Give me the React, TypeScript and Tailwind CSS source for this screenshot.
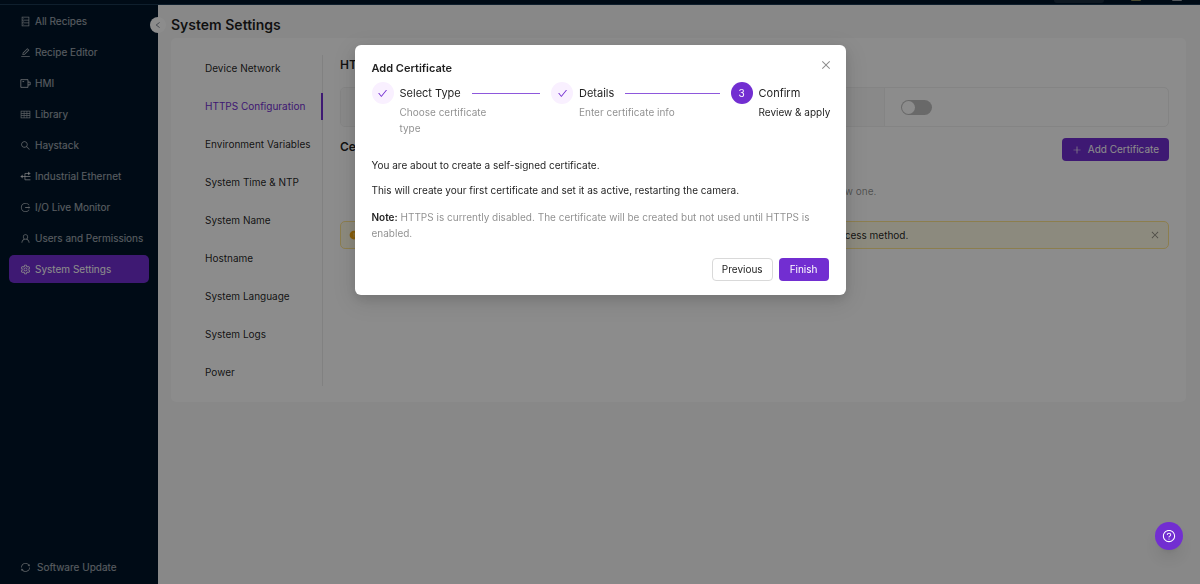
import { useState } from "react";
import type { IconType } from "react-icons";
import {
  AiFillExclamationCircle,
  AiOutlineCheck,
  AiOutlineClose,
  AiOutlineDatabase,
  AiOutlineEdit,
  AiOutlineLeft,
  AiOutlineLogout,
  AiOutlinePlus,
  AiOutlineQuestionCircle,
  AiOutlineSearch,
  AiOutlineSetting,
  AiOutlineSync,
  AiOutlineTable,
  AiOutlineUser,
} from "react-icons/ai";

interface NavItem {
  label: string;
  icon: IconType | (() => React.ReactNode);
}

const HmiIcon = () => (
  <svg viewBox="0 0 20 20" className="size-full" fill="none" stroke="currentColor" strokeWidth="1.8">
    <path d="M1.5 3h13v14h-13z" />
    <path d="M14.5 7.5h4v5h-4M4.5 6.5h3" />
  </svg>
);

const EthernetIcon = () => (
  <svg viewBox="0 0 20 20" className="size-full" fill="none" stroke="currentColor" strokeWidth="1.8">
    <path d="M2 10h17M9 4.5h8M9 4.5v11.5M9 16h10" />
    <path d="M5 6.5 0.5 10 5 13.5zM14.5 1 19.5 4.5l-5 3.5z" fill="currentColor" stroke="none" />
  </svg>
);

const navItems: NavItem[] = [
  { label: "All Recipes", icon: AiOutlineDatabase },
  { label: "Recipe Editor", icon: AiOutlineEdit },
  { label: "HMI", icon: HmiIcon },
  { label: "Library", icon: AiOutlineTable },
  { label: "Haystack", icon: AiOutlineSearch },
  { label: "Industrial Ethernet", icon: EthernetIcon },
  { label: "I/O Live Monitor", icon: AiOutlineLogout },
  { label: "Users and Permissions", icon: AiOutlineUser },
  { label: "System Settings", icon: AiOutlineSetting },
];

const settingsTabs = [
  "Device Network",
  "HTTPS Configuration",
  "Environment Variables",
  "System Time & NTP",
  "System Name",
  "Hostname",
  "System Language",
  "System Logs",
  "Power",
];

const steps = [
  { title: "Select Type", description: "Choose certificate type" },
  { title: "Details", description: "Enter certificate info" },
  { title: "Confirm", description: "Review & apply" },
];

const Sidebar = () => (
  <aside className="relative flex w-[158px] shrink-0 flex-col justify-between bg-[#001529] text-white/65">
    <nav className="flex flex-col gap-[3px] px-[9px] pt-0.5">
      {navItems.map(({ label, icon: Icon }) => (
        <a
          key={label}
          href="#"
          className={`flex h-7 items-center gap-1 rounded-[5px] pl-[11px] text-[10px] whitespace-nowrap ${
            label === "System Settings" ? "bg-[#722ed1] text-white" : ""
          }`}
        >
          <span className="size-[11px] shrink-0 [&>svg]:size-full">
            <Icon />
          </span>
          {label}
        </a>
      ))}
    </nav>
    <a href="#" className="mb-[3px] flex h-7 items-center gap-1.5 pl-5 text-[10px]">
      <AiOutlineSync className="size-[11px]" />
      Software Update
    </a>
    <button
      aria-label="Collapse menu"
      className="absolute top-3 -right-2 flex size-4 items-center justify-center rounded-full bg-white text-gray-500"
    >
      <AiOutlineLeft className="size-2" />
    </button>
  </aside>
);

const HttpsPanel = () => {
  const [enabled, setEnabled] = useState(false);

  return (
    <section className="min-w-0 flex-1">
      <h2 className="text-[12px] leading-5 font-semibold">HTTPS Configuration</h2>
      <div className="mt-3 flex h-10 overflow-hidden rounded-[5px] border border-[#f0f0f0]">
        <label
          htmlFor="https"
          className="flex w-[544px] items-center border-r border-[#f0f0f0] bg-[#fafafa] px-4 text-[10px] text-black/65"
        >
          HTTPS
        </label>
        <div className="flex items-center px-4">
          <input
            id="https"
            type="checkbox"
            role="switch"
            checked={enabled}
            onChange={(e) => setEnabled(e.target.checked)}
            className="h-[15px] w-[31px] appearance-none rounded-full bg-black/25 before:m-px before:block before:size-[13px] before:rounded-full before:bg-white checked:bg-[#722ed1] checked:before:ml-[17px]"
          />
        </div>
      </div>
      <div className="mt-[11px] flex items-start justify-between">
        <h2 className="text-[12px] leading-[18px] font-semibold">Certificates</h2>
        <button className="flex h-[23px] items-center gap-1.5 rounded-[4px] bg-[#722ed1] px-[10px] text-[10px] text-white">
          <AiOutlinePlus className="size-[10px]" />
          Add Certificate
        </button>
      </div>
      <p className="mt-[22px] text-center text-[10px] leading-4 text-black/45">
        No certificates are available. Please add a new one.
      </p>
      <div
        role="alert"
        className="mt-[22px] flex h-7 items-center gap-1.5 rounded-[5px] border border-[#ffe58f] bg-[#fffbe6] px-2 text-[10px]"
      >
        <AiFillExclamationCircle className="size-[10px] shrink-0 text-[#faad14]" />
        <span className="flex-1">
          HTTPS is currently disabled. The camera can only be reached over HTTP until you choose another access method.
        </span>
        <button aria-label="Close alert" className="text-black/45">
          <AiOutlineClose className="size-[10px]" />
        </button>
      </div>
    </section>
  );
};

const CertificateModal = () => (
  <div className="fixed inset-0 flex items-start justify-center bg-black/45 pt-[45px]">
    <div
      role="dialog"
      aria-modal="true"
      aria-labelledby="modal-title"
      className="relative w-[491px] rounded-[6px] bg-white px-[17px] py-[14px] shadow-[0_4px_12px_rgba(0,0,0,0.12),0_6px_24px_6px_rgba(0,0,0,0.08)]"
    >
      <button aria-label="Close" className="absolute top-[14px] right-[14px] text-black/45">
        <AiOutlineClose className="size-3" />
      </button>
      <h2 id="modal-title" className="text-[11px] leading-[18px] font-semibold">
        Add Certificate
      </h2>
      <ol className="mt-[5px] flex gap-[11px]">
        {steps.map((step, index) => {
          const current = index === steps.length - 1;
          return (
            <li key={step.title} className={`flex gap-1.5 ${current ? "w-[98px] shrink-0" : "min-w-0 flex-1"}`}>
              <span
                className={`flex size-[22px] shrink-0 items-center justify-center rounded-full text-[10px] ${
                  current ? "bg-[#722ed1] text-white" : "bg-[#f9f0ff] text-[#722ed1]"
                }`}
              >
                {current ? index + 1 : <AiOutlineCheck className="size-[11px]" />}
              </span>
              <div className="min-w-0 flex-1 whitespace-nowrap">
                <div className="flex items-center gap-[11px] text-[11px] leading-[22px]">
                  {step.title}
                  {!current && <span className="h-px flex-1 bg-[#8e58dc]" />}
                </div>
                <p
                  className={`text-[10px] leading-4 ${
                    current ? "" : "max-w-[98px] whitespace-normal text-black/45"
                  }`}
                >
                  {step.description}
                </p>
              </div>
            </li>
          );
        })}
      </ol>
      <div className="mt-[21px] text-[10px] leading-4">
        <p>You are about to create a self-signed certificate.</p>
        <p className="mt-[9px]">
          This will create your first certificate and set it as active, restarting the camera.
        </p>
        <p className="mt-[11px] text-black/45">
          <strong className="font-semibold text-black/88">Note:</strong> HTTPS is currently disabled. The
          certificate will be created but not used until HTTPS is enabled.
        </p>
      </div>
      <div className="mt-[17px] flex justify-end gap-1.5 text-[10px]">
        <button className="h-[23px] rounded-[4px] border border-[#d9d9d9] px-[9px]">Previous</button>
        <button className="h-[23px] rounded-[4px] bg-[#722ed1] px-[11px] text-white">Finish</button>
      </div>
    </div>
  </div>
);

const App = () => {
  const [activeTab, setActiveTab] = useState("HTTPS Configuration");

  return (
    <div className="flex min-h-screen flex-col bg-[#f7f7f7] font-[Inter,sans-serif] text-black/88">
      <header className="flex h-[5px] items-start justify-end border-b border-[#1d3a52] bg-[#001529] pr-[18px]">
        <span className="mr-[27px] h-[3px] w-[50px] rounded-b-[3px] bg-white/10" />
        <span className="mr-[31px] h-px w-[10px] rounded-b-full bg-[#8a8a5a]" />
        <span className="h-px w-[10px] rounded-b-full bg-white/60" />
      </header>
      <div className="flex flex-1">
        <Sidebar />
        <main className="min-w-0 flex-1 pr-[14px] pl-[13px]">
          <h1 className="pt-2 text-[14px] leading-6 font-semibold">System Settings</h1>
          <div className="mt-px flex rounded-[5px] bg-white px-[17px] pt-[17px] pb-4">
            <div className="mr-[17px] flex w-[135px] flex-col gap-[11px] border-r border-[#ebebeb]">
              {settingsTabs.map((tab) => (
                <button
                  key={tab}
                  onClick={() => setActiveTab(tab)}
                  className={`-mr-px h-[27px] border-r-2 pl-[17px] text-left text-[10px] whitespace-nowrap ${
                    tab === activeTab ? "border-[#722ed1] text-[#722ed1]" : "border-transparent"
                  }`}
                >
                  {tab}
                </button>
              ))}
            </div>
            <HttpsPanel />
          </div>
        </main>
      </div>
      <CertificateModal />
      <button
        aria-label="Help"
        className="fixed right-[17px] bottom-[34px] flex size-7 items-center justify-center rounded-full bg-[#722ed1] text-white shadow-lg"
      >
        <AiOutlineQuestionCircle className="size-[14px]" />
      </button>
    </div>
  );
};

export default App;
